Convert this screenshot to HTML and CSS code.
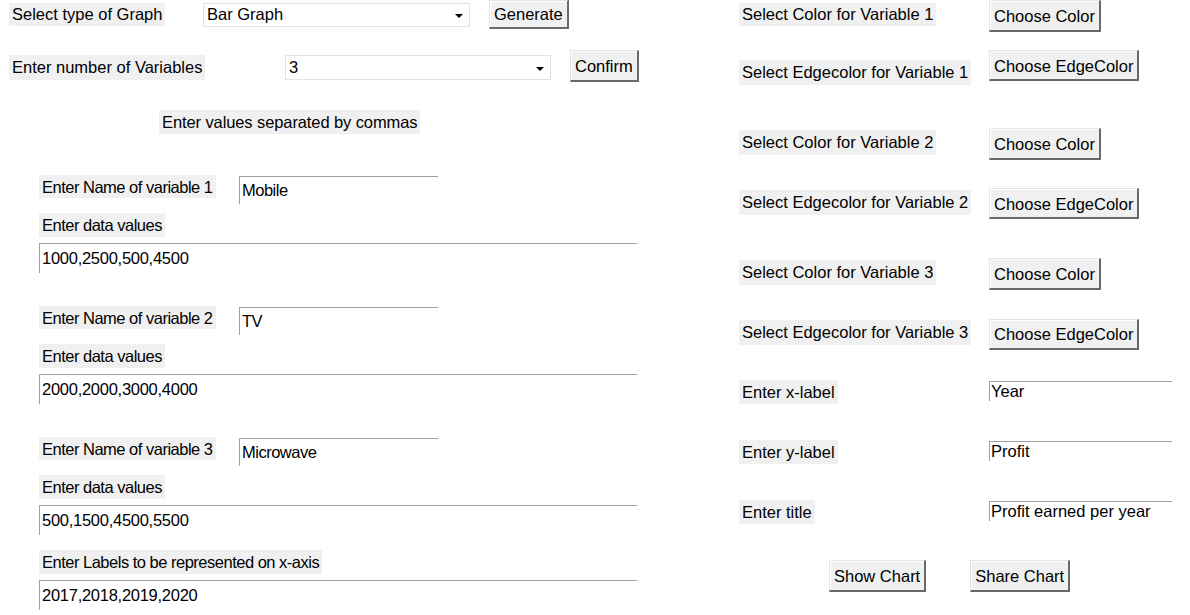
FILE: index.html
```html
<!DOCTYPE html>
<html>
<head>
<meta charset="utf-8">
<title>Graph Generator</title>
<link rel="stylesheet" href="styles.css">
</head>
<body>
<div class="window">
  <div class="col-left">
    <div class="row row-graph">
      <span class="lbl">Select type of Graph</span>
      <div class="combo combo-graph"><span>Bar Graph</span><i class="arrow"></i></div>
      <button class="btn btn-generate">Generate</button>
    </div>
    <div class="row row-count">
      <span class="lbl">Enter number of Variables</span>
      <div class="combo combo-count"><span>3</span><i class="arrow"></i></div>
      <button class="btn btn-confirm">Confirm</button>
    </div>
    <div class="row row-hint">
      <span class="lbl">Enter values separated by commas</span>
    </div>

    <div class="var-block">
      <div class="name-row">
        <span class="lbl">Enter Name of variable 1</span>
        <div class="entry entry-name">Mobile</div>
      </div>
      <span class="lbl lbl-data">Enter data values</span>
      <div class="entry entry-data">1000,2500,500,4500</div>
    </div>

    <div class="var-block">
      <div class="name-row">
        <span class="lbl">Enter Name of variable 2</span>
        <div class="entry entry-name">TV</div>
      </div>
      <span class="lbl lbl-data">Enter data values</span>
      <div class="entry entry-data">2000,2000,3000,4000</div>
    </div>

    <div class="var-block">
      <div class="name-row">
        <span class="lbl">Enter Name of variable 3</span>
        <div class="entry entry-name">Microwave</div>
      </div>
      <span class="lbl lbl-data">Enter data values</span>
      <div class="entry entry-data">500,1500,4500,5500</div>
    </div>

    <div class="labels-block">
      <span class="lbl lbl-data">Enter Labels to be represented on x-axis</span>
      <div class="entry entry-data">2017,2018,2019,2020</div>
    </div>
  </div>

  <div class="col-right">
    <div class="rrow rrow-c1">
      <span class="lbl">Select Color for Variable 1</span>
      <button class="btn btn-color">Choose Color</button>
    </div>
    <div class="rrow rrow-e1">
      <span class="lbl">Select Edgecolor for Variable 1</span>
      <button class="btn btn-edge">Choose EdgeColor</button>
    </div>
    <div class="rrow rrow-c2">
      <span class="lbl">Select Color for Variable 2</span>
      <button class="btn btn-color">Choose Color</button>
    </div>
    <div class="rrow rrow-e2">
      <span class="lbl">Select Edgecolor for Variable 2</span>
      <button class="btn btn-edge">Choose EdgeColor</button>
    </div>
    <div class="rrow rrow-c3">
      <span class="lbl">Select Color for Variable 3</span>
      <button class="btn btn-color">Choose Color</button>
    </div>
    <div class="rrow rrow-e3">
      <span class="lbl">Select Edgecolor for Variable 3</span>
      <button class="btn btn-edge">Choose EdgeColor</button>
    </div>
    <div class="rrow rrow-field rrow-x">
      <span class="lbl">Enter x-label</span>
      <div class="entry entry-small">Year</div>
    </div>
    <div class="rrow rrow-field rrow-y">
      <span class="lbl">Enter y-label</span>
      <div class="entry entry-small">Profit</div>
    </div>
    <div class="rrow rrow-field rrow-t">
      <span class="lbl">Enter title</span>
      <div class="entry entry-small">Profit earned per year</div>
    </div>
    <div class="actions">
      <button class="btn btn-show">Show Chart</button>
      <button class="btn btn-share">Share Chart</button>
    </div>
  </div>
</div>
</body>
</html>
```

FILE: styles.css
```css
* { box-sizing: border-box; }

html, body {
  margin: 0;
  padding: 0;
  background: #ffffff;
}

body {
  font-family: "Liberation Sans", Arial, sans-serif;
  font-size: 16.5px;
  color: #000;
  width: 1190px;
  height: 615px;
  overflow: hidden;
}

.window {
  display: flex;
  align-items: flex-start;
}

/* ---------- shared widgets ---------- */
.lbl {
  display: inline-block;
  background: #f0f0f0;
  padding: 2px 3px;
  line-height: 19px;
  height: 23px;
  white-space: nowrap;
}

.btn {
  font-family: inherit;
  font-size: 16.5px;
  color: #000;
  background: #f0f0f0;
  border-style: solid;
  border-width: 1px 2px 2px 1px;
  border-color: #e3e3e3 #696969 #696969 #e3e3e3;
  box-shadow: inset 1px 1px 0 #ffffff;
  padding: 0 4px;
  height: 31px;
  line-height: 27px;
  white-space: nowrap;
  margin: 0;
}

.combo {
  display: flex;
  align-items: center;
  justify-content: space-between;
  background: #fff;
  border: 1px solid #e3e3e3;
  padding: 0 6px 1px 3px;
  height: 24px;
}

.arrow {
  display: block;
  width: 0;
  height: 0;
  border-left: 4px solid transparent;
  border-right: 4px solid transparent;
  border-top: 4px solid #000;
  margin-top: 3px;
}

.entry {
  background: #fff;
  border-style: solid;
  border-width: 1px 0 0 1px;
  border-color: #a0a0a0;
  padding: 0 2px;
  white-space: nowrap;
  overflow: hidden;
}

/* ---------- left column ---------- */
.col-left {
  width: 739px;
  padding-left: 9px;
  display: flex;
  flex-direction: column;
  align-items: flex-start;
}

.row {
  display: grid;
  align-items: start;
  justify-items: start;
  height: 32px;
}

.row-graph {
  grid-template-columns: 194px 286px auto;
}
.row-graph .lbl { margin-top: 3px; }
.row-graph .combo { margin-top: 3px; width: 267px; }
.btn-generate { height: 29px; line-height: 25px; }

.row-count {
  margin-top: 18px;
  grid-template-columns: 276px 285px auto;
}
.row-count .lbl { margin-top: 5px; height: 25px; padding-top: 3px; }
.row-count .combo { margin-top: 5px; width: 266px; height: 25px; }
.btn-confirm { height: 32px; line-height: 28px; }

.row-hint {
  margin-top: 28px;
  padding-left: 150px;
  height: 23px;
}
.row-hint .lbl { letter-spacing: -0.1px; padding-top: 3px; height: 24px; }

.var-block {
  margin-top: 42px;
  margin-left: 30px;
  display: flex;
  flex-direction: column;
  align-items: flex-start;
  height: 98px;
}
.var-block + .var-block { margin-top: 33px; }

.var-block .lbl,
.labels-block .lbl {
  letter-spacing: -0.5px;
  padding-top: 3px;
  padding-bottom: 1px;
}

.name-row {
  display: grid;
  grid-template-columns: 200px 199px;
  align-items: start;
  justify-items: start;
  height: 29px;
}

.entry-name {
  margin-top: 1px;
  width: 199px;
  height: 28px;
  line-height: 26px;
  letter-spacing: -0.5px;
}

.lbl-data { margin-top: 9px; height: 24px; }

.entry-data {
  margin-top: 6px;
  width: 598px;
  height: 30px;
  line-height: 28px;
  letter-spacing: -0.27px;
}

.labels-block {
  margin-top: 6px;
  margin-left: 30px;
  display: flex;
  flex-direction: column;
  align-items: flex-start;
}

/* ---------- right column ---------- */
.col-right {
  flex: 1;
  display: flex;
  flex-direction: column;
}

.rrow {
  display: grid;
  grid-template-columns: 250px auto;
  align-items: start;
  justify-items: start;
}

.btn-color { height: 32px; line-height: 28px; }
.btn-edge { height: 31px; line-height: 27px; }

.rrow-c1 .lbl { margin-top: 3px; }

.rrow-e1 { margin-top: 18px; }
.rrow-e1 .lbl { margin-top: 10px; height: 25px; padding-top: 3px; }

.rrow-c2 { margin-top: 43px; }
.rrow-c2 .lbl,
.rrow-e2 .lbl,
.rrow-c3 .lbl,
.rrow-e3 .lbl { margin-top: 2px; height: 25px; padding-top: 3px; }

.rrow-e2 { margin-top: 28px; }
.rrow-c3 { margin-top: 39px; }
.rrow-e3 { margin-top: 28px; }
.rrow-e3 .btn { margin-top: 1px; }

.rrow-e1 .btn,
.rrow-e2 .btn { padding-top: 2px; }

.rrow-field .lbl { height: 24px; padding-top: 3px; }
.rrow-x { margin-top: 30px; }
.rrow-y,
.rrow-t { margin-top: 36px; }

.entry-small {
  margin-top: 1px;
  width: 183px;
  height: 20px;
  line-height: 19px;
  padding: 0 1px;
}

.actions {
  margin-top: 36px;
  padding-left: 90px;
  display: flex;
  gap: 44px;
}
.btn-show,
.btn-share { height: 32px; line-height: 30px; }
```
